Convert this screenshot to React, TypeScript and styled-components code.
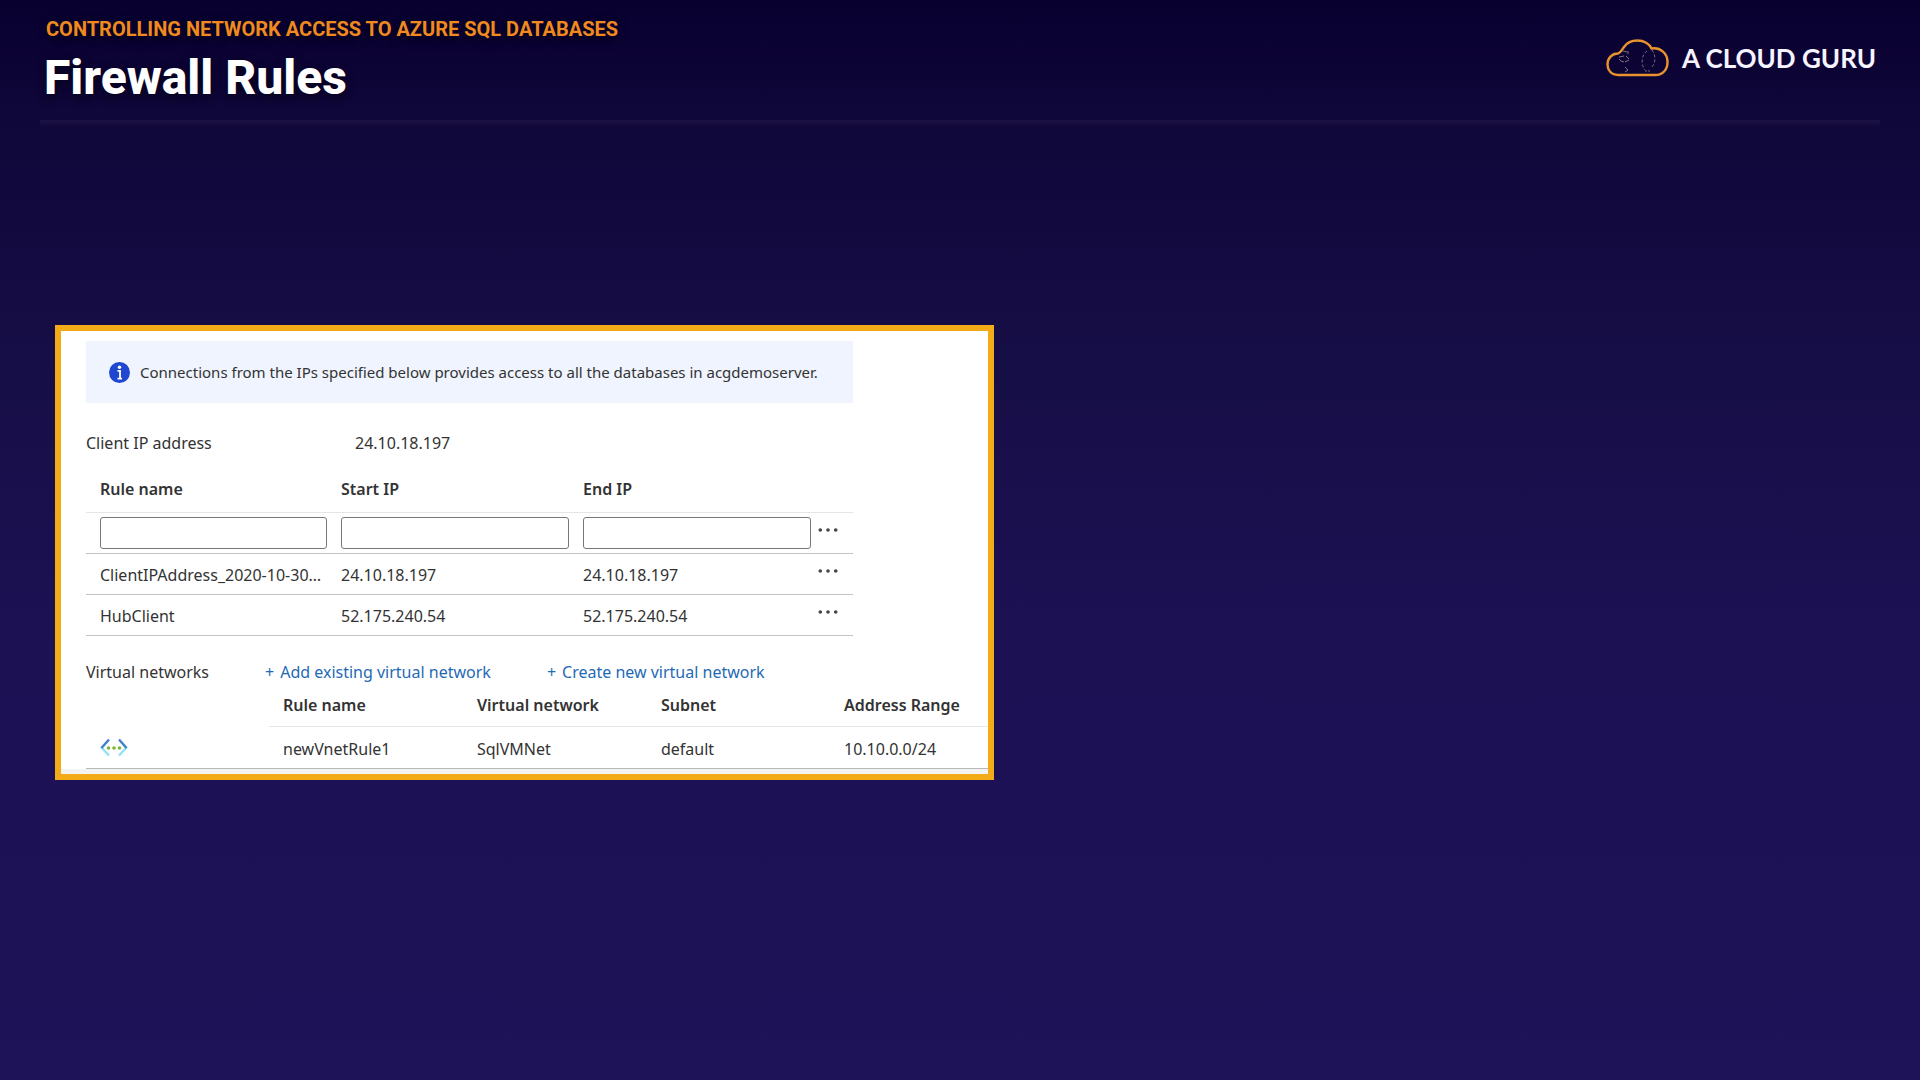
import React from "react";
import styled, { createGlobalStyle } from "styled-components";

const GlobalStyle = createGlobalStyle`
  *, *::before, *::after { box-sizing: border-box; }
  body { margin: 0; background: #1e1258; }
`;

const Slide = styled.div`
  min-height: 100vh;
  padding: 0 40px;
  background: linear-gradient(180deg, #08002f 0%, #0f0639 10%, #160e46 33%, #1c1153 58%, #1e1258 100%);
  font-family: "Noto Sans", "Open Sans", sans-serif;
`;

const Header = styled.header`
  display: flex;
  justify-content: space-between;
  align-items: flex-start;
  height: 120px;
  padding: 16px 4px 0;
`;

const Divider = styled.hr`
  height: 6px;
  margin: 0;
  border: 0;
  background: linear-gradient(180deg, #1d1446, #120839);
`;

const Headings = styled.div`
  font-family: Roboto, Inter, sans-serif;
  text-shadow: 0 3px 10px rgba(0, 0, 0, 0.6);
`;

const Kicker = styled.p`
  margin: 0 0 4px 2px;
  font-size: 20px;
  line-height: 26px;
  font-weight: 700;
  color: #f08a1e;
`;

const Title = styled.h1`
  margin: 0;
  font-size: 48px;
  line-height: 64px;
  font-weight: 800;
  color: #ffffff;
`;

const Brand = styled.div`
  display: flex;
  align-items: center;
  gap: 13px;
  padding-top: 23px;
`;

const BrandName = styled.span`
  font: 700 26px/36px Lato, sans-serif;
  color: #f6f4ff;
`;

const Panel = styled.main`
  width: 939px;
  max-width: 100%;
  margin: 199px 0 0 15px;
  border: 6px solid #f3ab17;
  background: #ffffff;
  color: #333333;
  font-size: 16px;
  line-height: 24px;
`;

const PanelBody = styled.div`
  padding: 10px 0 0 25px;
`;

const PanelFoot = styled.div`
  height: 5px;
  background: #f3f3f3;
`;

const Notice = styled.div`
  display: flex;
  align-items: center;
  gap: 10px;
  width: 767px;
  height: 62px;
  padding-left: 23px;
  background: #eff4fe;
  font-size: 15px;
`;

const ClientIp = styled.dl`
  display: grid;
  grid-template-columns: 269px auto;
  margin: 28px 0 0;
  dd { margin: 0; }
`;

const RulesTable = styled.table`
  width: 767px;
  margin-top: 12px;
  table-layout: fixed;
  border-collapse: collapse;
  text-align: left;
`;

const RuleRow = styled.tr`
  height: 41px;
  border-bottom: 1px solid #c4c4c4;
`;

const HeadRow = styled.tr<{ $height: number }>`
  height: ${(p) => p.$height}px;
  th { border-bottom: 1px solid #e6e6e6; }
`;

const FieldCell = styled.td`
  padding: 0 0 0 14px;
`;

const Cell = styled.td`
  padding: 2px 0 0 14px;
  white-space: nowrap;
`;

const HeadCell = styled.th`
  padding: 0 0 0 14px;
  font-weight: 600;
  white-space: nowrap;
`;

const Field = styled.input`
  display: block;
  width: 100%;
  height: 32px;
  border: 1px solid #767676;
  border-radius: 3px;
  background: #ffffff;
  font: inherit;
`;

const MoreButton = styled.button`
  display: flex;
  width: 32px;
  height: 24px;
  padding: 6px;
  border: 0;
  background: none;
`;

const Networks = styled.div`
  display: flex;
  align-items: center;
  margin-top: 24px;
`;

const NetworksLabel = styled.span`
  width: 179px;
`;

const NetworkLink = styled.a`
  display: flex;
  gap: 6px;
  margin-right: 56px;
  color: #1f6ab5;
  text-decoration: none;
`;

const NetworkTable = styled.table`
  width: 100%;
  table-layout: fixed;
  border-collapse: collapse;
  text-align: left;
`;

const NetworkRow = styled.tr`
  height: 42px;
  border-bottom: 1px solid #b8b8b8;
  svg { display: block; }
`;

const rules = [
  { name: "ClientIPAddress_2020-10-30…", start: "24.10.18.197", end: "24.10.18.197" },
  { name: "HubClient", start: "52.175.240.54", end: "52.175.240.54" },
];

const CloudLogo = () => (
  <svg width="63" height="38" viewBox="0 0 63 38" fill="none" aria-hidden="true">
    <path d="M12 36C5 36 1.500 31 1.500 25.500C1.500 19 6 14.500 12 14.500C14.500 13.500 16 11 18 8C21 3.500 26 1.500 31.500 1.500C38 1.500 43.500 5 45.500 9.500C54 8 61.500 14 61.500 23C61.500 31 56.500 36 49.500 36Z" stroke="#e8932e" strokeWidth="2.400" />
    <path d="M17 12l4 1M13 18l5-1M20 17l3 3M15 22l3 1M19 23l4-2M19 28l3 3M13 20l2 2M19 33l3-2M22 12v3" stroke="#a58a91" strokeWidth="0.800" />
    <path d="M41 12c-5 3-7 13-2 19M46 11c4 5 4 14-1 18M39 32h2m1 0h2" stroke="#80677e" strokeWidth="1" strokeDasharray="3 2" />
  </svg>
);

const InfoIcon = () => (
  <svg width="21" height="21" viewBox="0 0 21 21" aria-hidden="true">
    <circle cx="10.500" cy="10.500" r="10.500" fill="#1f47cf" />
    <circle cx="10.500" cy="5.200" r="1.700" fill="#fff" />
    <path d="M8.500 8.800h2.500v8M8.500 16.600h4.500" stroke="#fff" strokeWidth="1.800" fill="none" />
  </svg>
);

const More = ({ label }: { label: string }) => (
  <MoreButton type="button" aria-label={label}>
    <svg width="22" height="6" viewBox="0 0 22 6" fill="#444" aria-hidden="true">
      <circle cx="2.500" cy="3" r="2" />
      <circle cx="11" cy="3" r="2" />
      <circle cx="19.500" cy="3" r="2" />
    </svg>
  </MoreButton>
);

const VnetIcon = () => (
  <svg width="28" height="20" viewBox="0 0 28 20" fill="none" aria-hidden="true">
    <path d="M1 9L9 17.500M27 9L19 17.500" stroke="#8fe3f2" strokeWidth="2.400" />
    <path d="M9 1.500L1.500 10M19 1.500L26.500 10" stroke="#3f7fd0" strokeWidth="2.400" />
    <g fill="#7cb82f">
      <circle cx="8.500" cy="10" r="1.800" />
      <circle cx="14" cy="10" r="1.800" />
      <circle cx="19.500" cy="10" r="1.800" />
    </g>
  </svg>
);

export default function App() {
  return (
    <Slide>
      <GlobalStyle />
      <Header>
        <Headings>
          <Kicker>CONTROLLING NETWORK ACCESS TO AZURE SQL DATABASES</Kicker>
          <Title>Firewall Rules</Title>
        </Headings>
        <Brand>
          <CloudLogo />
          <BrandName>A CLOUD GURU</BrandName>
        </Brand>
      </Header>
      <Divider />
      <Panel>
        <PanelBody>
          <Notice>
            <InfoIcon />
            <span>Connections from the IPs specified below provides access to all the databases in acgdemoserver.</span>
          </Notice>
          <ClientIp>
            <dt>Client IP address</dt>
            <dd>24.10.18.197</dd>
          </ClientIp>
          <RulesTable>
            <colgroup>
              <col style={{ width: 241 }} />
              <col style={{ width: 242 }} />
              <col style={{ width: 242 }} />
              <col />
            </colgroup>
            <thead>
              <HeadRow $height={45}>
                <HeadCell>Rule name</HeadCell>
                <HeadCell>Start IP</HeadCell>
                <HeadCell>End IP</HeadCell>
                <HeadCell aria-label="Actions" />
              </HeadRow>
            </thead>
            <tbody>
              <RuleRow>
                <FieldCell><Field aria-label="Rule name" /></FieldCell>
                <FieldCell><Field aria-label="Start IP" /></FieldCell>
                <FieldCell><Field aria-label="End IP" /></FieldCell>
                <td><More label="More options for new rule" /></td>
              </RuleRow>
              {rules.map((rule) => (
                <RuleRow key={rule.name}>
                  <Cell>{rule.name}</Cell>
                  <Cell>{rule.start}</Cell>
                  <Cell>{rule.end}</Cell>
                  <td><More label={`More options for ${rule.name}`} /></td>
                </RuleRow>
              ))}
            </tbody>
          </RulesTable>
          <Networks>
            <NetworksLabel>Virtual networks</NetworksLabel>
            <NetworkLink href="#add"><span>+</span><span>Add existing virtual network</span></NetworkLink>
            <NetworkLink href="#create"><span>+</span><span>Create new virtual network</span></NetworkLink>
          </Networks>
          <NetworkTable>
            <colgroup>
              <col style={{ width: 183 }} />
              <col style={{ width: 194 }} />
              <col style={{ width: 184 }} />
              <col style={{ width: 183 }} />
              <col />
            </colgroup>
            <thead>
              <HeadRow $height={43}>
                <td />
                <HeadCell>Rule name</HeadCell>
                <HeadCell>Virtual network</HeadCell>
                <HeadCell>Subnet</HeadCell>
                <HeadCell>Address Range</HeadCell>
              </HeadRow>
            </thead>
            <tbody>
              <NetworkRow>
                <Cell><VnetIcon /></Cell>
                <Cell>newVnetRule1</Cell>
                <Cell>SqlVMNet</Cell>
                <Cell>default</Cell>
                <Cell>10.10.0.0/24</Cell>
              </NetworkRow>
            </tbody>
          </NetworkTable>
        </PanelBody>
        <PanelFoot />
      </Panel>
    </Slide>
  );
}
